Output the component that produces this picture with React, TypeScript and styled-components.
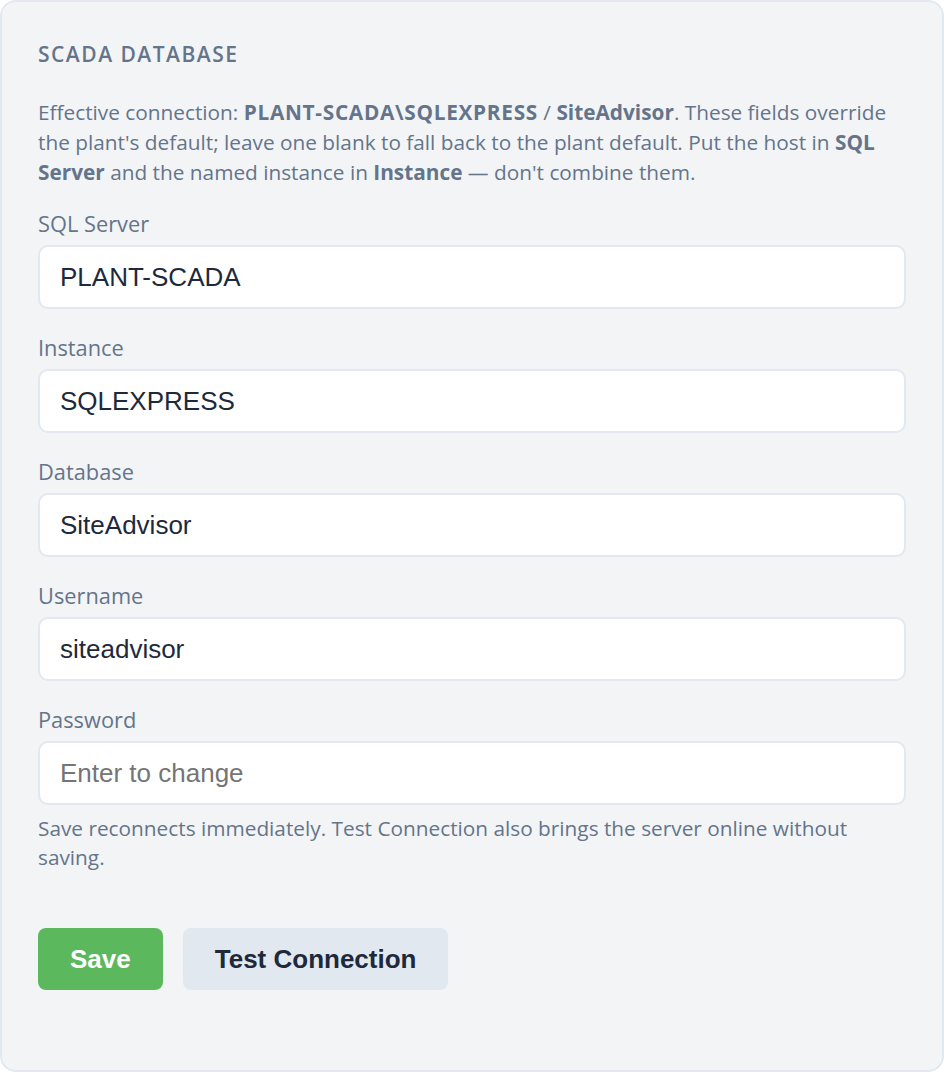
import React from "react";
import styled, { createGlobalStyle } from "styled-components";

const GlobalStyle = createGlobalStyle`
  * { box-sizing: border-box; }
  html, body { margin: 0; padding: 0; background: #ffffff; }
  body { font-family: "Open Sans", "Noto Sans", sans-serif; }
`;

const Card = styled.section`
  width: 944px;
  min-height: 1072px;
  background: #f3f4f6;
  border: 2px solid #e2e8f0;
  border-radius: 16px;
  padding: 37px 36px 36px 36px;
  display: flex;
  flex-direction: column;
  color: #64748b;
`;

const Title = styled.h2`
  margin: 0;
  font-size: 21px;
  line-height: 30px;
  font-weight: 600;
  letter-spacing: 1.5px;
  text-transform: uppercase;
  color: #64748b;
`;

const Intro = styled.p`
  margin: 28px 0 0 0;
  font-size: 20.8px;
  line-height: 30px;
  color: #64748b;
`;

const Strong = styled.strong<{ $wide?: boolean }>`
  font-weight: 700;
  letter-spacing: ${(p) => (p.$wide ? "0.7px" : "0")};
`;

const Fields = styled.div`
  margin-top: 22px;
  display: flex;
  flex-direction: column;
  gap: 24px;
`;

const Field = styled.label`
  display: flex;
  flex-direction: column;
  gap: 6px;
`;

const LabelText = styled.span`
  font-size: 21.8px;
  line-height: 30px;
  color: #64748b;
`;

const Input = styled.input`
  width: 100%;
  height: 64px;
  border: 2px solid #e2e8f0;
  border-radius: 10px;
  background: #ffffff;
  padding: 0 20px;
  font-family: "Liberation Sans", Arial, sans-serif;
  font-size: 26px;
  color: #1e293b;
  outline: none;

  &::placeholder {
    color: #757575;
  }
`;

const Hint = styled.p`
  margin: 9px 0 0 0;
  font-size: 20.8px;
  line-height: 29px;
  color: #64748b;
`;

const Actions = styled.div`
  margin-top: 56px;
  display: flex;
  gap: 20px;
`;

const Button = styled.button<{ $variant: "primary" | "secondary" }>`
  height: 62px;
  padding: 0 32px;
  border: none;
  border-radius: 8px;
  font-family: "Liberation Sans", Arial, sans-serif;
  font-weight: 700;
  font-size: 26px;
  cursor: pointer;
  background: ${(p) => (p.$variant === "primary" ? "#5cb85c" : "#e2e8f0")};
  color: ${(p) => (p.$variant === "primary" ? "#ffffff" : "#1e293b")};
`;

const fields = [
  { label: "SQL Server", value: "PLANT-SCADA" },
  { label: "Instance", value: "SQLEXPRESS" },
  { label: "Database", value: "SiteAdvisor" },
  { label: "Username", value: "siteadvisor" },
];

export default function App() {
  return (
    <>
      <GlobalStyle />
      <Card>
        <Title>SCADA Database</Title>
        <Intro>
          Effective connection: <Strong $wide>PLANT-SCADA\SQLEXPRESS</Strong> /{" "}
          <Strong>SiteAdvisor</Strong>. These fields override the plant's default;
          leave one blank to fall back to the plant default. Put the host in{" "}
          <Strong>SQL Server</Strong> and the named instance in{" "}
          <Strong>Instance</Strong> — don't combine them.
        </Intro>
        <Fields>
          {fields.map((f) => (
            <Field key={f.label}>
              <LabelText>{f.label}</LabelText>
              <Input type="text" defaultValue={f.value} />
            </Field>
          ))}
          <Field>
            <LabelText>Password</LabelText>
            <Input type="password" placeholder="Enter to change" />
          </Field>
        </Fields>
        <Hint>
          Save reconnects immediately. Test Connection also brings the server online
          without saving.
        </Hint>
        <Actions>
          <Button $variant="primary">Save</Button>
          <Button $variant="secondary">Test Connection</Button>
        </Actions>
      </Card>
    </>
  );
}
